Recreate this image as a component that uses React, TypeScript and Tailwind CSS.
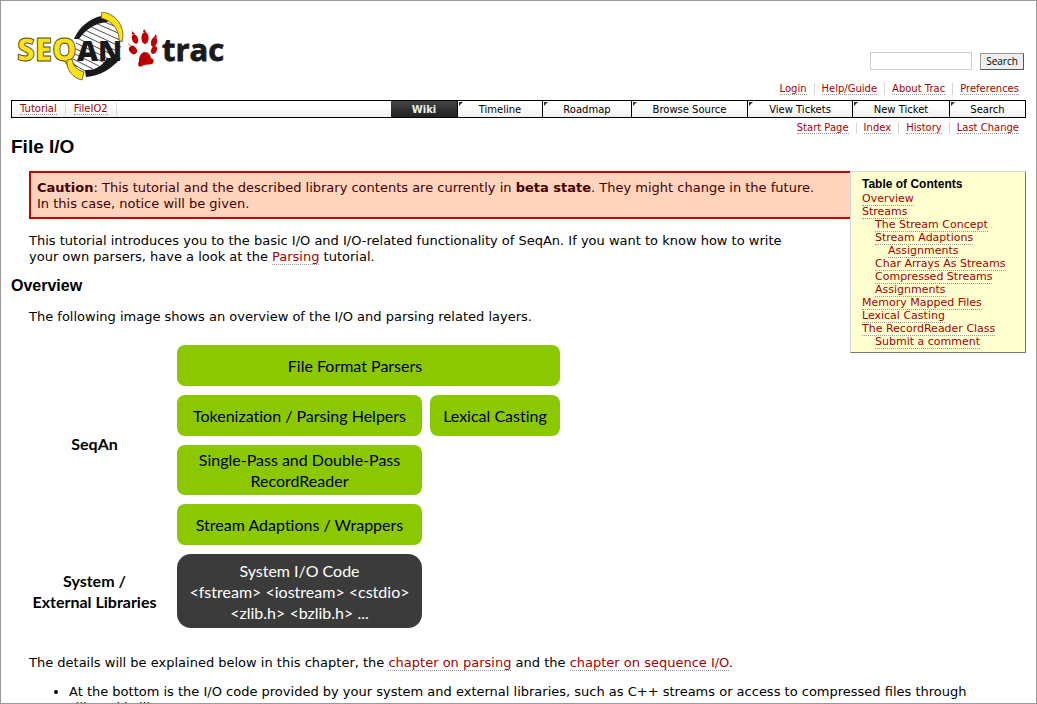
import React from "react";

const metaLinks = ["Login", "Help/Guide", "About Trac", "Preferences"];
const contextLinks = ["Start Page", "Index", "History", "Last Change"];
const tabs = [
  { label: "Wiki", width: "w-[66px]", active: true },
  { label: "Timeline", width: "w-[85px]" },
  { label: "Roadmap", width: "w-[89px]" },
  { label: "Browse Source", width: "w-[116px]" },
  { label: "View Tickets", width: "w-[105px]" },
  { label: "New Ticket", width: "w-[97px]" },
  { label: "Search", width: "w-[76px]" },
];
const toc = [
  { label: "Overview", indent: "pl-0" },
  { label: "Streams", indent: "pl-0" },
  { label: "The Stream Concept", indent: "pl-[13px]" },
  { label: "Stream Adaptions", indent: "pl-[13px]" },
  { label: "Assignments", indent: "pl-[26px]" },
  { label: "Char Arrays As Streams", indent: "pl-[13px]" },
  { label: "Compressed Streams", indent: "pl-[13px]" },
  { label: "Assignments", indent: "pl-[13px]" },
  { label: "Memory Mapped Files", indent: "pl-0" },
  { label: "Lexical Casting", indent: "pl-0" },
  { label: "The RecordReader Class", indent: "pl-0" },
  { label: "Submit a comment", indent: "pl-[13px]" },
];

function A({ children }: { children: React.ReactNode }) {
  return (
    <a href="#" className="border-b border-dotted border-[#999999] text-[#aa0000]">
      {children}
    </a>
  );
}

function LinkBar({ links, label }: { links: string[]; label: string }) {
  return (
    <nav aria-label={label}>
      <ul className="flex justify-end text-[10px] leading-[12px]">
        {links.map((l) => (
          <li key={l} className="border-l border-[#d7d7d7] px-[7px] first:border-l-0">
            <A>{l}</A>
          </li>
        ))}
      </ul>
    </nav>
  );
}

function Logo() {
  return (
    <svg width="216" height="72" viewBox="0 0 216 72" role="img" aria-label="SeqAn trac">
      <path d="M60 50 L64 27 C72 16 80 9 92 6 C104 10 109 22 109 36 L100 50 L76 62 L66 58 Z" fill="#ffffff" />
      <path d="M87 7 L103 14 M82 10 L107 21 M78 14 L109 28 M74 18 L110 35 M70 22 L108 40 M66 26 L104 44 M65 31 L100 48 M63 36 L94 51 M62 41 L88 54 M62 47 L82 57 M62 52 L76 60" stroke="#222222" strokeWidth="0.8" />
      <path d="M63 27 C68 15 78 7 90 4 L99 8 L96 10 C84 11 74 18 68 27 Z" fill="#1a1a1a" />
      <path d="M74 58 C84 59 92 53 96 46 L110 46 C101 56 90 64 75 65 Z" fill="#1a1a1a" />
      <path d="M91 0 C106 2 115 16 111 30 L108 28 C108 18 102 9 90 6 Z" fill="#ffe11a" stroke="#55501a" strokeWidth="0.8" />
      <text x="6" y="49" fontFamily="Open Sans, sans-serif" fontWeight="800" fontSize="31" fill="#ffe11a" stroke="#55501a" strokeWidth="0.9">SEQ</text>
      <path d="M56 48 C55 58 62 66 71 68 L73 60 C66 58 62 54 61 47 Z" fill="#ffe11a" stroke="#55501a" strokeWidth="0.8" />
      <text x="66" y="49" fontFamily="Open Sans, sans-serif" fontWeight="800" fontSize="29" fill="#1a1a1a">AN</text>
      <g fill="#bb0000">
        <ellipse cx="124" cy="27" rx="3" ry="5" transform="rotate(-20 124 27)" />
        <ellipse cx="134" cy="26" rx="3.6" ry="6" />
        <ellipse cx="143" cy="30" rx="3" ry="5" transform="rotate(15 143 30)" />
        <ellipse cx="122" cy="38" rx="3.6" ry="4.5" transform="rotate(-40 122 38)" />
        <ellipse cx="143" cy="38" rx="2.8" ry="4" transform="rotate(25 143 38)" />
        <path d="M133 40 C138 40 139 43 140 46 C143 47 144 50 141 52 C137 53 134 52 131 54 C128 56 126 53 128 49 C128 45 129 42 133 40 Z" />
        <path d="M132 20 L133 17 L135 20 Z M121 22 L121 19 L124 22 Z M143 25 L145 22 L146 26 Z M118 33 L117 31 L120 34 Z" />
      </g>
      <text x="151" y="49" fontFamily="Open Sans, sans-serif" fontWeight="700" fontSize="31" fill="#1a1a1a" stroke="#1a1a1a" strokeWidth="0.8">trac</text>
    </svg>
  );
}

const box = "flex items-center justify-center bg-[#8bc800] text-center";

function LayerDiagram() {
  return (
    <div className="grid w-[531px] grid-cols-[140px_245px_130px] gap-x-2 gap-y-[9px] font-[Lato] text-[16px] leading-[21px] text-black [font-variant-ligatures:none]">
      <div className="row-span-4 flex items-center justify-center pr-[9px] pb-1 font-bold">SeqAn</div>
      <div className={`${box} col-span-2 h-[41px] rounded-lg pr-[27px]`}>File Format Parsers</div>
      <div className={`${box} h-[41px] rounded-lg`}>Tokenization / Parsing Helpers</div>
      <div className={`${box} h-[41px] rounded-lg`}>Lexical Casting</div>
      <div className={`${box} h-[50px] rounded-lg`}>
        Single-Pass and Double-Pass
        <br />
        RecordReader
      </div>
      <div />
      <div className={`${box} h-[41px] rounded-lg`}>Stream Adaptions / Wrappers</div>
      <div />
      <div className="flex items-center justify-center pr-[9px] text-center font-bold">
        System /<br />
        External Libraries
      </div>
      <div className="flex h-[74px] items-center justify-center rounded-[14px] bg-[#3b3b3b] text-center text-white">
        System I/O Code
        <br />
        &lt;fstream&gt; &lt;iostream&gt; &lt;cstdio&gt;
        <br />
        &lt;zlib.h&gt; &lt;bzlib.h&gt; ...
      </div>
    </div>
  );
}

export default function App() {
  return (
    <div className="h-screen overflow-hidden border border-[#999999] bg-white px-[10px] font-['DejaVu_Sans',sans-serif] text-[13px] leading-[16px] text-black">
      <header className="flex items-start justify-between pt-[11px]">
        <a href="#" aria-label="SeqAn trac home">
          <Logo />
        </a>
        <div className="pt-[40px]">
          <form className="flex items-center justify-end gap-2 pr-[2px]" onSubmit={(e) => e.preventDefault()}>
            <input aria-label="Search" type="text" className="h-[18px] w-[102px] border border-[#cccccc] bg-white px-1 text-[11px]" />
            <button className="h-[17px] w-[44px] border border-[#999999] border-r-[#555555] border-b-[#555555] bg-[#eeeeee] font-['Open_Sans'] text-[10px] leading-[14px] text-black">
              Search
            </button>
          </form>
          <div className="pt-[13px]">
            <LinkBar links={metaLinks} label="Account" />
          </div>
        </div>
      </header>

      <nav aria-label="Main" className="mt-[5px] flex h-[18px] justify-between border border-black bg-linear-to-b from-white from-40% to-[#eeeeee] text-[10px] leading-[17px]">
        <ul className="flex items-center pl-[1px] leading-[12px]">
          {["Tutorial", "FileIO2"].map((l) => (
            <li key={l} className="border-r border-[#d7d7d7] px-[8px] first:pl-[7px]">
              <A>{l}</A>
            </li>
          ))}
        </ul>
        <ul className="flex text-center">
          {tabs.map((t) => (
            <li key={t.label} className={`relative ${t.width} ${t.active ? "bg-linear-to-b from-[#444444] to-[#222222] font-bold text-[#eeeeee]" : "border-l border-black"}`}>
              {!t.active && (
                <svg className="absolute top-px left-px" width="4" height="4" viewBox="0 0 4 4" aria-hidden="true">
                  <path d="M0 0H4L0 4Z" fill="#333333" />
                </svg>
              )}
              <a href="#" className="block h-4">{t.label}</a>
            </li>
          ))}
        </ul>
      </nav>
      <div className="pt-[4px]">
        <LinkBar links={contextLinks} label="Page" />
      </div>

      <main>
        <h1 className="pt-[2px] font-['Liberation_Sans'] text-[19px] leading-[22px] font-bold">File I/O</h1>
        <aside className="float-right mt-[13px] ml-3 w-[176px] border border-[#d7d7d7] border-r-[#777777] border-b-[#777777] bg-[#ffffd0] pt-[6px] pb-[4px] pl-[11px] text-[11px] leading-[13px]">
          <h4 className="pb-px font-['Liberation_Sans'] text-[12px] leading-[13px] font-bold">Table of Contents</h4>
          <ul>
            {toc.map((t, i) => (
              <li key={i} className={t.indent}>
                <A>{t.label}</A>
              </li>
            ))}
          </ul>
        </aside>
        <div className="mt-[13px] ml-[18px] border-2 border-[#cc0000] bg-[#ffd4bd] px-[6px] pt-[7px] pb-[5px] text-[#440000]">
          <p className="max-w-[785px]">
            <strong>Caution</strong>: This tutorial and the described library contents are currently in <strong>beta state</strong>. They might change in the future. In this case, notice will be given.
          </p>
        </div>
        <p className="mt-[14px] ml-[18px] max-w-[770px]">
          This tutorial introduces you to the basic I/O and I/O-related functionality of SeqAn. If you want to know how to write your own parsers, have a look at the <A>Parsing</A> tutorial.
        </p>
        <h2 className="mt-[11px] font-['Liberation_Sans'] text-[16px] leading-[20px] font-bold">Overview</h2>
        <p className="mt-[13px] ml-[18px]">The following image shows an overview of the I/O and parsing related layers.</p>
        <div className="mt-5 ml-[18px]">
          <LayerDiagram />
        </div>
        <p className="mt-[27px] ml-[18px]">
          The details will be explained below in this chapter, the <A>chapter on parsing</A> and the <A>chapter on sequence I/O</A>.
        </p>
        <ul className="mt-[13px] ml-[58px] max-w-[920px] list-disc">
          <li>At the bottom is the I/O code provided by your system and external libraries, such as C++ streams or access to compressed files through zlib and bzlib.</li>
        </ul>
      </main>
    </div>
  );
}
